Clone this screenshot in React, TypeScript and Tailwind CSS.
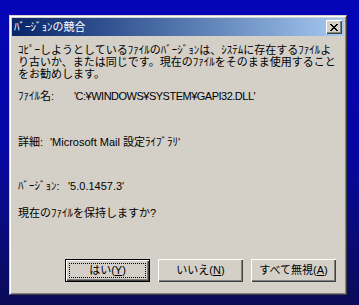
import React from "react";

const font = "font-['Liberation_Sans','Noto_Sans_CJK_JP',sans-serif]";

const Btn = ({ label, hot, isDefault }: { label: string; hot: string; isDefault?: boolean }) => {
  if (isDefault) {
    return (
      <div className="w-[85px] h-[23px] border border-black bg-[#d4d0c8] shadow-[inset_1px_1px_0_#ffffff,inset_-1px_-1px_0_#404040,inset_-2px_-2px_0_#808080] p-[3px]">
        <div className="h-full border border-dotted border-black flex items-center justify-center leading-none">
          <span>
            {label}(<span className="underline">{hot}</span>)
          </span>
        </div>
      </div>
    );
  }
  return (
    <div className="w-[85px] h-[23px] bg-[#d4d0c8] shadow-[inset_1px_1px_0_#ffffff,inset_-1px_-1px_0_#404040,inset_-2px_-2px_0_#808080] flex items-center justify-center leading-none">
      <span>
        {label}(<span className="underline">{hot}</span>)
      </span>
    </div>
  );
};

export default function App() {
  return (
    <div className={`w-[359px] h-[305px] bg-linear-to-b from-[#0505b8] via-[#0606a2] to-[#0b0b58] pl-[9px] pt-[15px] ${font} text-[11px] text-black`}>
      <div className="w-[338px] h-[280px] bg-[#d4d0c8] border border-t-[#d4d0c8] border-l-[#d4d0c8] border-r-[#404040] border-b-[#404040] shadow-[inset_1px_1px_0_#ffffff,inset_-1px_-1px_0_#808080] p-[2px] flex flex-col">
        {/* title bar */}
        <div className="h-[18px] bg-linear-to-r from-[#0a246a] to-[#a6caf0] flex items-center justify-between pl-[2px] pr-[2px]">
          <span className="text-white leading-none">ﾊﾞｰｼﾞｮﾝの競合</span>
          <div className="w-[16px] h-[14px] bg-[#d4d0c8] shadow-[inset_1px_1px_0_#ffffff,inset_-1px_-1px_0_#404040,inset_-2px_-2px_0_#808080] flex items-center justify-center">
            <svg width="8" height="7" viewBox="0 0 8 7" shapeRendering="crispEdges">
              <path d="M0 0h2v1h-2zM6 0h2v1h-2zM1 1h2v1h-2zM5 1h2v1h-2zM2 2h4v1h-4zM3 3h2v1h-2zM2 4h4v1h-4zM1 5h2v1h-2zM5 5h2v1h-2zM0 6h2v1h-2zM6 6h2v1h-2z" fill="#000" />
            </svg>
          </div>
        </div>

        {/* body */}
        <div className="flex-1 flex flex-col pl-[6px] pt-[8px] leading-[12px] whitespace-nowrap">
          <p>ｺﾋﾟｰしようとしているﾌｧｲﾙのﾊﾞｰｼﾞｮﾝは、ｼｽﾃﾑに存在するﾌｧｲﾙよ</p>
          <p>り古いか、または同じです。現在のﾌｧｲﾙをそのまま使用すること</p>
          <p>をお勧めします。</p>

          <div className="flex mt-[10px]">
            <span className="w-[56px]">ﾌｧｲﾙ名:</span>
            <span className="tracking-[-0.5px]">'C:¥WINDOWS¥SYSTEM¥GAPI32.DLL'</span>
          </div>
          <div className="flex mt-[34px]">
            <span className="w-[32px]">詳細:</span>
            <span>'Microsoft Mail 設定ﾗｲﾌﾞﾗﾘ'</span>
          </div>
          <div className="flex mt-[32px]">
            <span className="w-[50px]">ﾊﾞｰｼﾞｮﾝ:</span>
            <span>'5.0.1457.3'</span>
          </div>
          <p className="mt-[15px]">現在のﾌｧｲﾙを保持しますか?</p>

          <div className="flex justify-end gap-[8px] pr-[8px] mt-[40px]">
            <Btn label="はい" hot="Y" isDefault />
            <Btn label="いいえ" hot="N" />
            <Btn label="すべて無視" hot="A" />
          </div>
        </div>
      </div>
    </div>
  );
}
